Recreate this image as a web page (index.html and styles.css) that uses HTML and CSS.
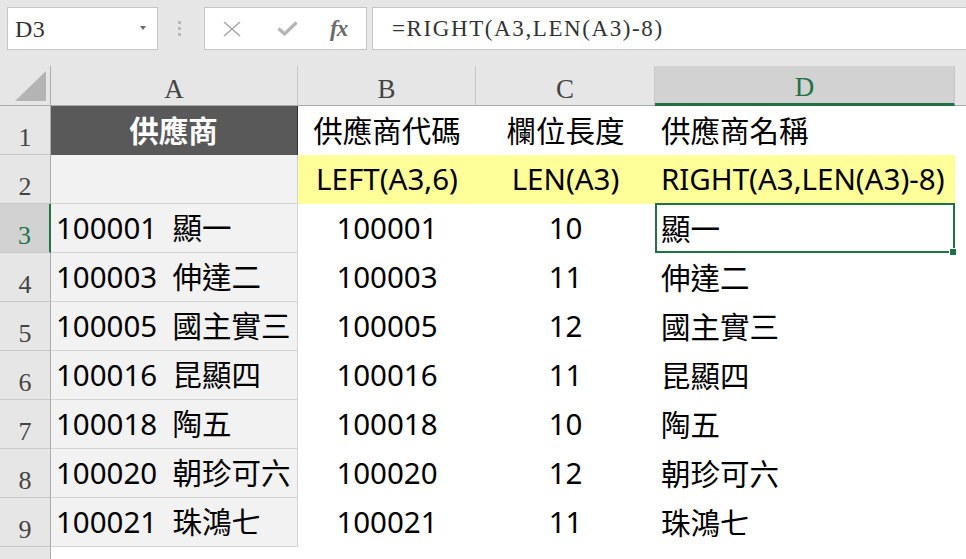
FILE: index.html
```html
<!DOCTYPE html>
<html lang="zh-Hant">
  <head>
    <meta charset="UTF-8" />
    <meta name="viewport" content="width=device-width, initial-scale=1.0" />
    <title>供應商名稱 - RIGHT</title>
    <link rel="stylesheet" href="styles.css">
  </head>
  <body>
    <!-- Formula bar -->
    <div class="toolbar">
      <div class="name-box">
        <span>D3</span>
        <span class="caret"></span>
      </div>
      <div class="grip"><i></i><i></i><i></i></div>
      <div class="fx-box">
        <svg class="icon-cancel" width="18" height="16" viewBox="0 0 18 16">
          <path d="M1 1 L17 15 M17 1 L1 15" stroke="#a8a8a8" stroke-width="1.6" fill="none" />
        </svg>
        <svg class="icon-enter" width="21" height="15" viewBox="0 0 21 15">
          <path d="M1.5 7.5 L7.5 13 L19.5 1.5" stroke="#b4b4b4" stroke-width="3.2" fill="none" />
        </svg>
        <span class="fx">fx</span>
      </div>
      <div class="formula">=RIGHT(A3,LEN(A3)-8)</div>
    </div>

    <!-- Worksheet -->
    <div class="sheet">
      <div class="corner"><span class="select-all"></span></div>
      <div class="col-head">A</div>
      <div class="col-head">B</div>
      <div class="col-head">C</div>
      <div class="col-head active">D</div>
      <div class="col-head last"></div>

      <div class="row-head">1</div>
      <div class="cell a title">供應商</div>
      <div class="cell center">供應商代碼</div>
      <div class="cell center">欄位長度</div>
      <div class="cell">供應商名稱</div>
      <div class="cell"></div>

      <div class="row-head">2</div>
      <div class="cell a"></div>
      <div class="cell center hint">LEFT(A3,6)</div>
      <div class="cell center hint">LEN(A3)</div>
      <div class="cell hint">RIGHT(A3,LEN(A3)-8)</div>
      <div class="cell"></div>

      <div class="row-head active">3</div>
      <div class="cell a">100001  顯一</div>
      <div class="cell center">100001</div>
      <div class="cell center">10</div>
      <div class="cell selected">顯一</div>
      <div class="cell"></div>

      <div class="row-head">4</div>
      <div class="cell a">100003  伸達二</div>
      <div class="cell center">100003</div>
      <div class="cell center">11</div>
      <div class="cell">伸達二</div>
      <div class="cell"></div>

      <div class="row-head">5</div>
      <div class="cell a">100005  國主實三</div>
      <div class="cell center">100005</div>
      <div class="cell center">12</div>
      <div class="cell">國主實三</div>
      <div class="cell"></div>

      <div class="row-head">6</div>
      <div class="cell a">100016  昆顯四</div>
      <div class="cell center">100016</div>
      <div class="cell center">11</div>
      <div class="cell">昆顯四</div>
      <div class="cell"></div>

      <div class="row-head">7</div>
      <div class="cell a">100018  陶五</div>
      <div class="cell center">100018</div>
      <div class="cell center">10</div>
      <div class="cell">陶五</div>
      <div class="cell"></div>

      <div class="row-head">8</div>
      <div class="cell a">100020  朝珍可六</div>
      <div class="cell center">100020</div>
      <div class="cell center">12</div>
      <div class="cell">朝珍可六</div>
      <div class="cell"></div>

      <div class="row-head">9</div>
      <div class="cell a">100021  珠鴻七</div>
      <div class="cell center">100021</div>
      <div class="cell center">11</div>
      <div class="cell">珠鴻七</div>
      <div class="cell"></div>

      <div class="row-head"></div>
      <div class="cell"></div>
      <div class="cell"></div>
      <div class="cell"></div>
      <div class="cell"></div>
      <div class="cell"></div>
    </div>
  </body>
</html>
```

FILE: styles.css
```css
body {
  margin: 0;
  padding: 0;
  background-color: #e6e6e6;
  font-family: "Noto Sans", "Noto Sans CJK TC", sans-serif;
  overflow: hidden;
}

/* Formula bar */
.toolbar {
  display: flex;
  align-items: flex-start;
  height: 66px;
  padding: 7px 0 0 7px;
  box-sizing: border-box;
}

.name-box,
.fx-box,
.formula {
  height: 43px;
  box-sizing: border-box;
  background-color: #fff;
  border: 1px solid #c6c6c6;
}

.name-box {
  display: flex;
  align-items: center;
  justify-content: space-between;
  width: 151px;
  padding: 2px 11px 0 7px;
  font-family: "Liberation Serif", serif;
  font-size: 24px;
  letter-spacing: 0.5px;
  color: #333;
}

.caret {
  width: 0;
  height: 0;
  border-left: 3.5px solid transparent;
  border-right: 3.5px solid transparent;
  border-top: 4px solid #6a6a6a;
  margin-top: -4px;
}

.grip {
  display: flex;
  flex-direction: column;
  gap: 3px;
  width: 3px;
  margin: 14px 23px 0 20px;
}

.grip i {
  display: block;
  width: 3px;
  height: 3px;
  background-color: #b9b9b9;
}

.fx-box {
  display: flex;
  align-items: center;
  width: 163px;
  padding: 0 0 0 18px;
}

.icon-enter {
  margin-left: 36px;
}

.fx {
  margin-left: 32px;
  font-family: "Liberation Serif", serif;
  font-style: italic;
  font-weight: bold;
  font-size: 23px;
  color: #6b6b6b;
  letter-spacing: -1px;
}

.formula {
  flex: 1;
  margin-left: 5px;
  margin-right: -2px;
  padding: 3px 0 0 19px;
  font-family: "Liberation Serif", serif;
  font-size: 23px;
  letter-spacing: 1.6px;
  line-height: 36px;
  color: #333;
}

/* Worksheet grid */
.sheet {
  display: grid;
  grid-template-columns: 51px 247px 178px 179px 300px 1fr;
  grid-template-rows: 40px repeat(9, 49px) 13px;
}

.corner,
.col-head,
.row-head {
  box-sizing: border-box;
  background-color: #e6e6e6;
  font-family: "Liberation Serif", serif;
  color: #444;
}

.corner {
  position: relative;
  border-right: 1px solid #ababab;
  border-bottom: 1px solid #ababab;
}

.select-all {
  position: absolute;
  right: 4px;
  bottom: 4px;
  width: 0;
  height: 0;
  border-left: 31px solid transparent;
  border-bottom: 30px solid #b4b4b4;
}

.col-head {
  display: flex;
  align-items: flex-end;
  justify-content: center;
  font-size: 27px;
  line-height: 1.15;
  border-right: 1px solid #c8c8c8;
  border-bottom: 1px solid #ababab;
}

.col-head.active {
  background-color: #d2d2d2;
  color: #217346;
  border-bottom: 3px solid #217346;
  padding-top: 2px;
}

.col-head.last {
  border-right: none;
}

.row-head {
  display: flex;
  align-items: flex-end;
  justify-content: center;
  padding-bottom: 1px;
  font-size: 26px;
  line-height: 1.15;
  border-right: 1px solid #ababab;
  border-bottom: 1px solid #c8c8c8;
}

.row-head.active {
  background-color: #d2d2d2;
  color: #217346;
  border-right: 2px solid #217346;
}

.cell {
  display: flex;
  align-items: center;
  box-sizing: border-box;
  padding: 0 6px 3px;
  background-color: #fff;
  font-size: 29.5px;
  color: #000;
  white-space: pre;
}

.cell.a {
  background-color: #f2f2f2;
  border-right: 1px solid #d4d4d4;
  border-bottom: 1px solid #d4d4d4;
  padding-left: 5px;
}

.cell.title {
  justify-content: center;
  background-color: #595959;
  color: #fff;
  font-weight: bold;
  border-right: 1px solid #333;
  border-bottom: none;
}

.center {
  justify-content: center;
}

.hint {
  background-color: #ffff99;
}

/* Active cell D3 */
.selected {
  position: relative;
}

.selected::before {
  content: "";
  position: absolute;
  top: -1px;
  left: 0;
  right: 0;
  bottom: 0;
  border: 2px solid #217346;
}

.selected::after {
  content: "";
  position: absolute;
  right: -2px;
  bottom: -3px;
  width: 6px;
  height: 6px;
  background-color: #217346;
  border: 1px solid #fff;
}
```
